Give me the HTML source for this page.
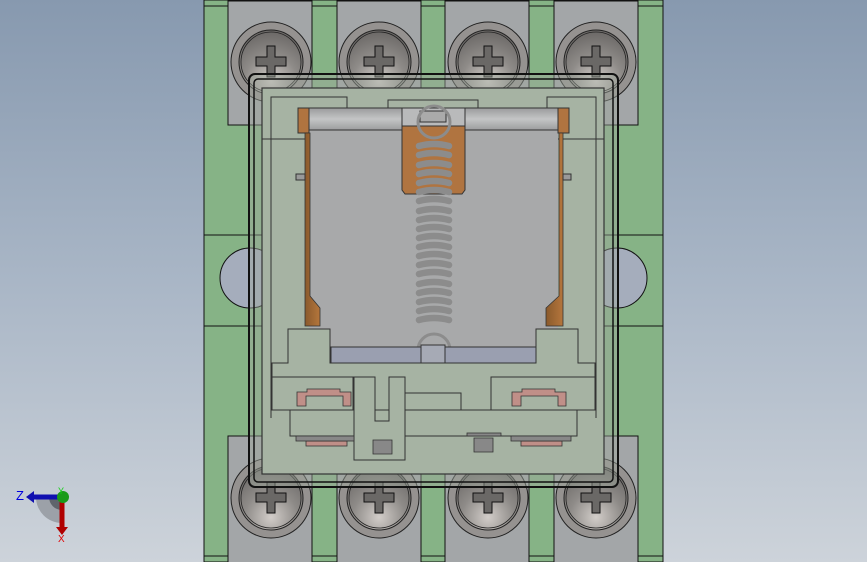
<!DOCTYPE html>
<html><head><meta charset="utf-8"><style>
html,body{margin:0;padding:0;width:867px;height:562px;overflow:hidden}
body{background:linear-gradient(#8799af,#a9b6c6 50%,#cdd3da)}
svg{position:absolute;left:0;top:0}
</style></head><body>
<svg width="867" height="562" viewBox="0 0 867 562" xmlns="http://www.w3.org/2000/svg">
<defs>
<radialGradient id="sg" cx="0.5" cy="0.8" r="0.75">
<stop offset="0" stop-color="#d2cdc9"/><stop offset="0.55" stop-color="#8e8b88"/><stop offset="1" stop-color="#6e6b69"/>
</radialGradient>
<linearGradient id="rod" x1="0" y1="0" x2="0" y2="1"><stop offset="0" stop-color="#9a9b9c"/><stop offset="0.5" stop-color="#c4c5c6"/><stop offset="1" stop-color="#9c9d9e"/></linearGradient>
<linearGradient id="cu" x1="0" y1="0" x2="1" y2="0"><stop offset="0" stop-color="#8a5a2c"/><stop offset="1" stop-color="#b5763c"/></linearGradient>
<g id="screw">
<circle r="40" fill="#959290" stroke="#222" stroke-width="1"/>
<circle r="32" fill="url(#sg)" stroke="#222" stroke-width="1"/>
<circle r="30" fill="none" stroke="#222" stroke-width="0.8"/>
<path d="M-4 -16h8v11h11v9h-11v11h-8v-11h-11v-9h11z" fill="#6a6866" stroke="#111" stroke-width="1"/>
</g>
</defs>
<rect x="204" y="0" width="459" height="562" fill="#86b386" stroke="#111" stroke-width="1"/>
<g stroke="#111" stroke-width="1">
<line x1="204" y1="6" x2="663" y2="6"/>
<line x1="204" y1="235" x2="663" y2="235"/>
<line x1="204" y1="326" x2="663" y2="326"/>
<line x1="204" y1="556" x2="663" y2="556"/>
</g>
<circle cx="250" cy="278" r="30" fill="#a5adbc" stroke="#111"/>
<circle cx="617" cy="278" r="30" fill="#a5adbc" stroke="#111"/>
<g fill="#a3a6a8" stroke="#111" stroke-width="1">
<rect x="228" y="1" width="84" height="124"/><rect x="337" y="1" width="84" height="124"/><rect x="445" y="1" width="84" height="124"/><rect x="554" y="1" width="84" height="124"/>
<rect x="228" y="436" width="84" height="127"/><rect x="337" y="436" width="84" height="127"/><rect x="445" y="436" width="84" height="127"/><rect x="554" y="436" width="84" height="127"/>
</g>
<use href="#screw" x="271" y="62"/><use href="#screw" x="379" y="62"/><use href="#screw" x="488" y="62"/><use href="#screw" x="596" y="62"/>
<use href="#screw" x="271" y="498"/><use href="#screw" x="379" y="498"/><use href="#screw" x="488" y="498"/><use href="#screw" x="596" y="498"/>
<rect x="249" y="74" width="369" height="413" rx="6" fill="#9fa99d" fill-opacity="0.45" stroke="#111" stroke-width="2"/>
<rect x="254" y="79" width="359" height="403" rx="4" fill="none" stroke="#111" stroke-width="1.5"/>
<rect x="262" y="88" width="342" height="386" fill="#a6b3a3" stroke="#333" stroke-width="1.2"/>
<g fill="none" stroke="#333" stroke-width="1">
<path d="M271 418V97h76v11H547V97h49v321"/>
<path d="M388 108v-8h90v8"/>
<line x1="262" y1="139" x2="309" y2="139"/><line x1="558" y1="139" x2="604" y2="139"/>
</g>
<rect x="309" y="130" width="249" height="218" fill="#a8a9aa"/>
<rect x="309" y="108" width="249" height="22" fill="url(#rod)" stroke="#333"/>
<rect x="298" y="108" width="11" height="25" fill="#b07440" stroke="#333"/>
<rect x="558" y="108" width="11" height="25" fill="#b07440" stroke="#333"/>
<path d="M305 133h5v163l10 12v18h-15z" fill="url(#cu)" stroke="#333" stroke-width="0.8"/>
<path d="M559 133h4v193h-17v-18l13-12z" fill="url(#cu)" stroke="#333" stroke-width="0.8"/>
<rect x="296" y="174" width="9" height="6" fill="#999" stroke="#333"/>
<rect x="563" y="174" width="8" height="6" fill="#999" stroke="#333"/>
<path d="M402 126h63v64l-3 4h-57l-3-4z" fill="#b07440" stroke="#333"/>
<rect x="402" y="108" width="63" height="18" fill="#b9babb" stroke="#333"/>
<rect x="420" y="111" width="26" height="11" fill="#aaa" stroke="#333"/>
<g fill="none" stroke="#8c8c8c">
<circle cx="434" cy="122" r="16" stroke-width="3"/>
<path stroke-width="6.5" stroke-linecap="round" d="M419 146q15 -4 30 0M419 155q15 -4 30 0M419 165q15 -4 30 0M419 174q15 -4 30 0M419 183q15 -4 30 0M419 192q15 -4 30 0M419 201q15 -4 30 0M419 211q15 -4 30 0M419 220q15 -4 30 0M419 229q15 -4 30 0M419 238q15 -4 30 0M419 247q15 -4 30 0M419 256q15 -4 30 0M419 265q15 -4 30 0M419 274q15 -4 30 0M419 284q15 -4 30 0M419 293q15 -4 30 0M419 302q15 -4 30 0M419 311q15 -4 30 0M419 320q15 -4 30 0"/>
<path d="M418 350a16 16 0 1 1 32 0" stroke-width="3"/>
</g>
<rect x="331" y="347" width="206" height="16" fill="#9a9fb0" stroke="#333"/>
<rect x="421" y="345" width="24" height="18" fill="#a6aab5" stroke="#333"/>
<g fill="#a6b3a3" stroke="#333" stroke-width="1">
<path d="M288 363v-34h42v34h206v-34h42v34h17v47H272v-47z"/>
<rect x="272" y="377" width="81" height="33"/>
<rect x="491" y="377" width="104" height="33"/>
<rect x="290" y="410" width="287" height="26"/>
<path d="M354 377h21v44h14v-44h16v83h-51z"/>
<rect x="405" y="393" width="56" height="17"/>
</g>
<g fill="#c08f88" stroke="#333" stroke-width="0.8">
<path d="M297 392h10v-3h33v3h11v14h-8v-10h-37v10h-9z"/>
<path d="M512 392h10v-3h33v3h11v14h-8v-10h-37v10h-9z"/>
<rect x="306" y="441" width="41" height="5"/><rect x="521" y="441" width="41" height="5"/>
</g>
<g fill="#888" stroke="#333" stroke-width="0.8">
<rect x="296" y="436" width="58" height="5"/><rect x="511" y="436" width="60" height="5"/>
<rect x="467" y="433" width="34" height="3"/>
<path d="M373 440h19v14h-19z"/><path d="M474 438h19v14h-19z"/>
</g>
<path d="M62 497h-26a26 26 0 0 0 26 26z" fill="#9ca1a8"/>
<path d="M62 497h-13a13 13 0 0 0 13 13z" fill="#5f646b"/>
<line x1="62" y1="497" x2="32" y2="497" stroke="#1010b0" stroke-width="5"/>
<path d="M26 497l8-6v12z" fill="#1010b0"/>
<line x1="62" y1="497" x2="62" y2="528" stroke="#b00000" stroke-width="5"/>
<path d="M62 535l-6-8h12z" fill="#b00000"/>
<circle cx="63" cy="497" r="6" fill="#1a9a1a"/>
<text x="16" y="500" font-family="Liberation Sans, sans-serif" font-size="13" fill="#0000e0">Z</text>
<text x="58" y="542" font-family="Liberation Sans, sans-serif" font-size="10" fill="#e00000">X</text>
<text x="58" y="494" font-family="Liberation Sans, sans-serif" font-size="9" fill="#10d010">Y</text>
</svg>
</body></html>
